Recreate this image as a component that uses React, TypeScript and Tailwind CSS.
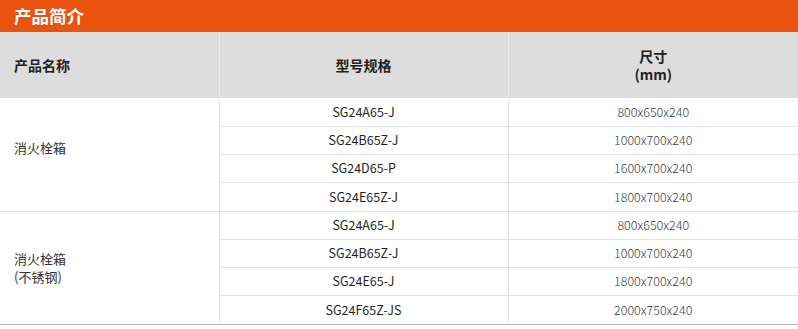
const groups = [
  {
    name: ["消火栓箱"],
    items: [
      ["SG24A65-J", "800x650x240"],
      ["SG24B65Z-J", "1000x700x240"],
      ["SG24D65-P", "1600x700x240"],
      ["SG24E65Z-J", "1800x700x240"],
    ],
  },
  {
    name: ["消火栓箱", "(不锈钢)"],
    items: [
      ["SG24A65-J", "800x650x240"],
      ["SG24B65Z-J", "1000x700x240"],
      ["SG24E65-J", "1800x700x240"],
      ["SG24F65Z-JS", "2000x750x240"],
    ],
  },
];

const App = () => {
  return (
    <div className="w-[798px] bg-white font-['Noto_Sans_CJK_SC','Noto_Sans',sans-serif]">
      {/* Title bar */}
      <div className="h-[32px] bg-[#e9530e] pl-[14px] flex items-center">
        <h2 className="text-[17.5px] font-bold text-white leading-none">产品简介</h2>
      </div>

      <table className="w-full border-collapse table-fixed border-b border-b-[#b5b5b5]">
        <colgroup>
          <col className="w-[219px]" />
          <col className="w-[289px]" />
          <col />
        </colgroup>
        <thead>
          <tr className="h-[66px] bg-[#dddddd] text-[14px] font-bold text-[#222] leading-[18px]">
            <th className="text-left pl-[14px] font-bold border-r border-r-[#ececec]">产品名称</th>
            <th className="text-center font-bold border-r border-r-[#ececec]">型号规格</th>
            <th className="text-center font-bold">
              <div className="leading-[16px]">尺寸</div>
              <div className="leading-[16px] mt-[2px]">(mm)</div>
            </th>
          </tr>
        </thead>
        <tbody>
          {groups.map((group, gi) =>
            group.items.map((item, i) => (
              <tr
                key={`${gi}-${i}`}
                className={`h-[28.25px] ${
                  i === 0 && gi > 0 ? "border-t border-t-[#e2e2e2]" : ""
                }`}
              >
                {i === 0 && (
                  <td
                    rowSpan={group.items.length}
                    className={`pl-[14px] align-middle text-[13px] text-[#333] leading-[18px] border-r border-r-[#e2e2e2] ${
                      group.name.length === 1 ? "pb-[12px]" : ""
                    }`}
                  >
                    {group.name.map((line) => (
                      <div key={line}>{line}</div>
                    ))}
                  </td>
                )}
                <td
                  className={`text-center text-[12.5px] text-[#1f1f1f] border-r border-r-[#e2e2e2] ${
                    i > 0 ? "border-t border-t-[#e2e2e2]" : ""
                  }`}
                >
                  {item[0]}
                </td>
                <td
                  className={`text-center text-[12.5px] font-light text-[#3a3a3a] ${
                    i > 0 ? "border-t border-t-[#e2e2e2]" : ""
                  }`}
                >
                  {item[1]}
                </td>
              </tr>
            ))
          )}
        </tbody>
      </table>
    </div>
  );
};

export default App;
